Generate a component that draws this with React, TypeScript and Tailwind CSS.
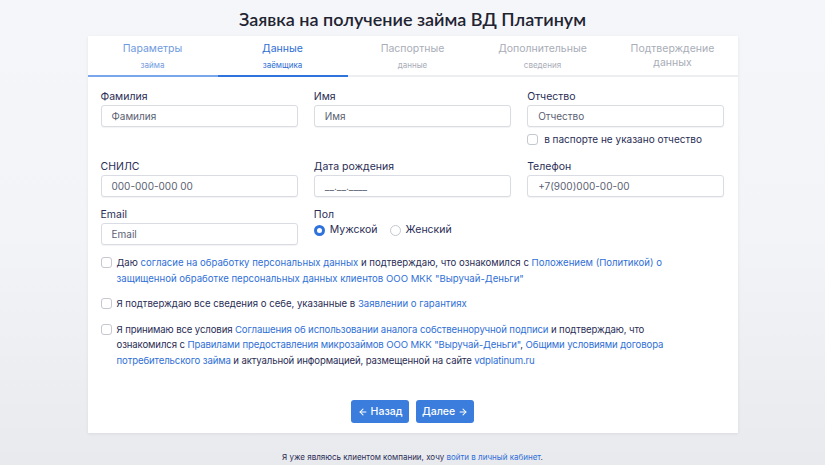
import { ArrowLeft, ArrowRight } from "lucide-react"

const tabs = [
  { a: "Параметры", b: "займа", state: "done" },
  { a: "Данные", b: "заёмщика", state: "active" },
  { a: "Паспортные", b: "данные", state: "todo" },
  { a: "Дополнительные", b: "сведения", state: "todo" },
  { a: "Подтверждение", b: "данных", state: "todo" },
]

function Field({ label, placeholder }: { label: string; placeholder: string }) {
  return (
    <div className="flex flex-col">
      <label className="text-[10.5px] leading-[14px] text-[#2a2d55] mb-[1px]">{label}</label>
      <div className="h-[22px] rounded-[3px] border border-[#d9dce3] bg-white px-[10px] flex items-center text-[10px] text-[#5b5f73] shadow-[0_1px_1px_rgba(0,0,0,0.05)]">
        {placeholder}
      </div>
    </div>
  )
}

function Box() {
  return <span className="mt-[2px] h-[11px] w-[11px] shrink-0 rounded-[3px] border border-[#c4c8d0] bg-white" />
}

const L = ({ children }: { children: React.ReactNode }) => <span className="text-[#2f6fd6]">{children}</span>

export default function App() {
  return (
    <div
      className="h-[465px] w-[825px] overflow-hidden bg-gradient-to-b from-[#f5f6f9] via-[#f3f4f7] to-[#e9eaee] text-[#2a2d55]"
      style={{ fontFamily: "Inter, 'Noto Sans', sans-serif" }}
    >
      <h1
        className="pt-[8px] h-[36px] text-center text-[18px] font-semibold leading-[22px] text-[#1f2433]"
        style={{ fontFamily: "Lato, 'Noto Sans', sans-serif" }}
      >
        Заявка на получение займа ВД Платинум
      </h1>

      <div className="mx-auto w-[650px] bg-white shadow-[0_1px_3px_rgba(30,40,70,0.08)]">
        <div className="grid grid-cols-5">
          {tabs.map((t) => (
            <div
              key={t.a}
              className={
                "flex h-[41px] flex-col items-center pt-[6px] border-b-2 " +
                (t.state === "done"
                  ? "border-[#7aa6ec] text-[#6f9ae0]"
                  : t.state === "active"
                  ? "border-[#2e74dc] text-[#2e6ed4]"
                  : "border-[#eceef2] text-[#a9adb8]")
              }
            >
              <span className="text-[10.5px] leading-[14px]">{t.a}</span>
              <span
                className={
                  "leading-[14px] " +
                  (t.a === "Подтверждение" ? "text-[10.5px]" : "text-[8px] mt-[2px]")
                }
              >
                {t.b}
              </span>
            </div>
          ))}
        </div>

        <div className="px-[13px] pt-[13px] pb-[10px]">
          <div className="grid grid-cols-3 gap-x-[16px]">
            <Field label="Фамилия" placeholder="Фамилия" />
            <Field label="Имя" placeholder="Имя" />
            <div>
              <Field label="Отчество" placeholder="Отчество" />
              <div className="mt-[5px] flex items-start gap-[6px] text-[10px] leading-[14px]">
                <Box />
                <span>в паспорте не указано отчество</span>
              </div>
            </div>
          </div>

          <div className="mt-[14px] grid grid-cols-3 gap-x-[16px]">
            <Field label="СНИЛС" placeholder="000-000-000 00" />
            <Field label="Дата рождения" placeholder="__.__.____" />
            <Field label="Телефон" placeholder="+7(900)000-00-00" />
          </div>

          <div className="mt-[11px] grid grid-cols-3 gap-x-[16px]">
            <Field label="Email" placeholder="Email" />
            <div className="flex flex-col">
              <span className="text-[10.5px] leading-[14px] mb-[1px]">Пол</span>
              <div className="flex items-center gap-[12px] text-[10.5px] leading-[14px]">
                <span className="flex items-center gap-[5px]">
                  <span className="h-[11px] w-[11px] rounded-full border-[3px] border-[#2f72dc] bg-white" />
                  Мужской
                </span>
                <span className="flex items-center gap-[5px]">
                  <span className="h-[11px] w-[11px] rounded-full border border-[#c4c8d0] bg-white" />
                  Женский
                </span>
              </div>
            </div>
          </div>

          <div className="mt-[10px] flex flex-col gap-[10px] text-[9.6px] leading-[15.5px] text-[#2a2d55]">
            <div className="flex items-start gap-[5px]">
              <Box />
              <p>
                Даю <L>согласие на обработку персональных данных</L> и подтверждаю, что ознакомился с{" "}
                <L>Положением (Политикой) о защищенной обработке персональных данных клиентов ООО МКК "Выручай-Деньги"</L>
              </p>
            </div>
            <div className="flex items-start gap-[5px]">
              <Box />
              <p>
                Я подтверждаю все сведения о себе, указанные в <L>Заявлении о гарантиях</L>
              </p>
            </div>
            <div className="flex items-start gap-[5px]">
              <Box />
              <p className="tracking-[-0.12px] whitespace-nowrap">
                Я принимаю все условия <L>Соглашения об использовании аналога собственноручной подписи</L> и
                подтверждаю, что
                <br />
                ознакомился с <L>Правилами предоставления микрозаймов ООО МКК "Выручай-Деньги"</L>,{" "}
                <L>Общими условиями договора</L>
                <br />
                <L>потребительского займа</L> и актуальной информацией, размещенной на сайте <L>vdplatinum.ru</L>
              </p>
            </div>
          </div>

          <div className="mt-[32px] flex justify-center gap-[7px]">
            <button className="flex h-[23px] w-[58px] items-center justify-center gap-[3px] rounded-[3px] bg-[#3a7ddc] text-[10.5px] font-medium text-white">
              <ArrowLeft size={10} strokeWidth={2.5} />
              Назад
            </button>
            <button className="flex h-[23px] w-[58px] items-center justify-center gap-[3px] rounded-[3px] bg-[#3a7ddc] text-[10.5px] font-medium text-white">
              Далее
              <ArrowRight size={10} strokeWidth={2.5} />
            </button>
          </div>
        </div>
      </div>

      <p className="mt-[18px] text-center text-[8px] text-[#2a2d55]">
        Я уже являюсь клиентом компании, хочу <L>войти в личный кабинет</L>.
      </p>
    </div>
  )
}
